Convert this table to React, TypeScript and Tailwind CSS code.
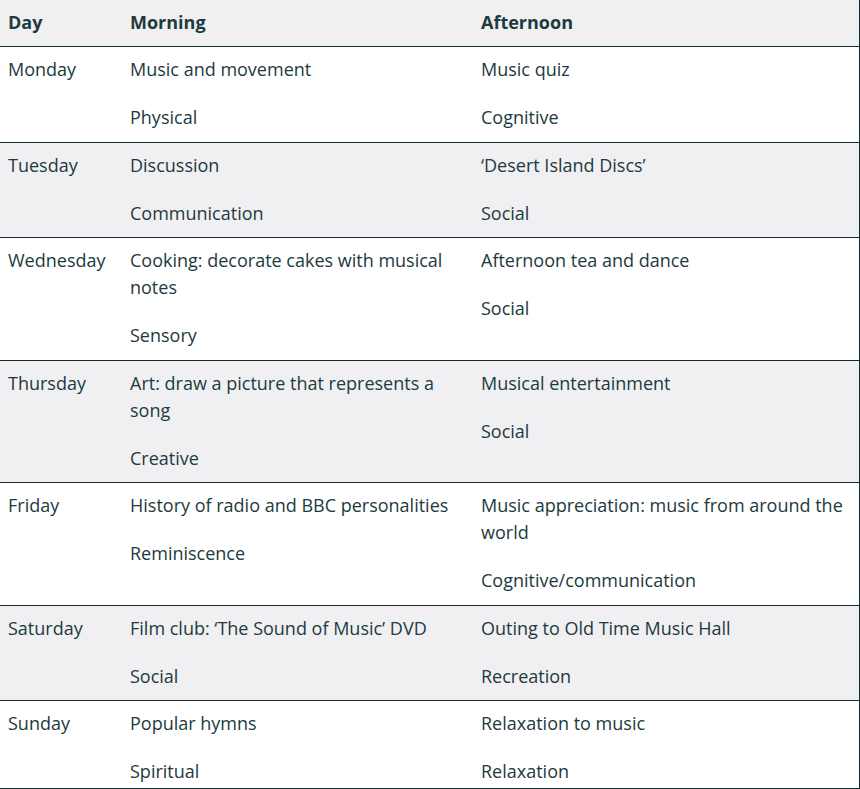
import React from "react";

type Row = { day: string; morning: string[]; afternoon: string[] };

const rows: Row[] = [
  { day: "Monday", morning: ["Music and movement", "Physical"], afternoon: ["Music quiz", "Cognitive"] },
  { day: "Tuesday", morning: ["Discussion", "Communication"], afternoon: ["\u2018Desert Island Discs\u2019", "Social"] },
  { day: "Wednesday", morning: ["Cooking: decorate cakes with musical notes", "Sensory"], afternoon: ["Afternoon tea and dance", "Social"] },
  { day: "Thursday", morning: ["Art: draw a picture that represents a song", "Creative"], afternoon: ["Musical entertainment", "Social"] },
  { day: "Friday", morning: ["History of radio and BBC personalities", "Reminiscence"], afternoon: ["Music appreciation: music from around the world", "Cognitive/communication"] },
  { day: "Saturday", morning: ["Film club: \u2018The Sound of Music\u2019 DVD", "Social"], afternoon: ["Outing to Old Time Music Hall", "Recreation"] },
  { day: "Sunday", morning: ["Popular hymns", "Spiritual"], afternoon: ["Relaxation to music", "Relaxation"] },
];

function Cell({ items, last }: { items: string[]; last: boolean }) {
  return (
    <div className={`px-2 pt-[9px] flex flex-col gap-[21px] ${last ? "pb-[3px]" : "pb-[10.5px]"}`}>
      {items.map((t, i) => (
        <p key={i}>{t}</p>
      ))}
    </div>
  );
}

export default function App() {
  return (
    <div
      className="w-[860px] bg-white text-[#1d3a40] text-[18px] leading-[27px]"
      style={{ fontFamily: "'Open Sans', Lato, sans-serif" }}
    >
      <div className="border-r border-b border-[#10302f]">
        <div className="grid grid-cols-[122px_351px_1fr] bg-[#f0f0f0] font-bold border-b border-[#10302f]">
          <div className="px-2 pt-[9px] pb-[10px]">Day</div>
          <div className="px-2 pt-[9px] pb-[10px]">Morning</div>
          <div className="px-2 pt-[9px] pb-[10px]">Afternoon</div>
        </div>
        {rows.map((r, i) => {
          const last = i === rows.length - 1;
          return (
            <div
              key={r.day}
              className={`grid grid-cols-[122px_351px_1fr] ${i % 2 === 1 ? "bg-[#f0f0f2]" : "bg-white"} ${last ? "" : "border-b border-[#10302f]"}`}
            >
              <Cell items={[r.day]} last={last} />
              <Cell items={r.morning} last={last} />
              <Cell items={r.afternoon} last={last} />
            </div>
          );
        })}
      </div>
    </div>
  );
}
